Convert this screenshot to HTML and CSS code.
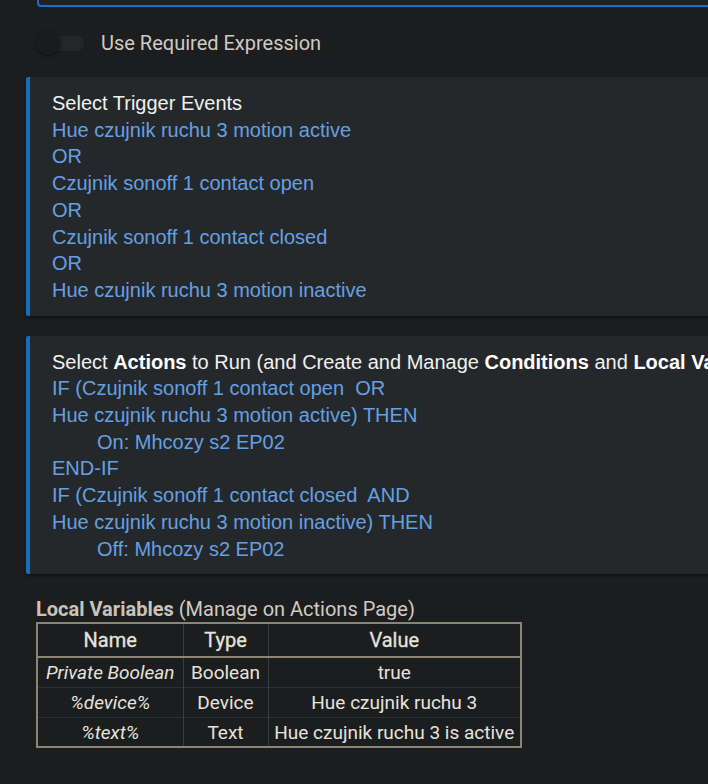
FILE: index.html
```html
<!DOCTYPE html>
<html lang="en">
<head>
  <meta charset="UTF-8">
  <meta name="viewport" content="width=device-width, initial-scale=1">
  <title>Rule Machine</title>
  <link rel="stylesheet" href="styles.css">
</head>
<body>
  <div class="page">
    <div class="expr-input"></div>

    <div class="switch-row">
      <span class="switch"><span class="knob"></span></span>
      <span class="switch-label">Use Required Expression</span>
    </div>

    <div class="card">
      <div class="card-title">Select Trigger Events</div>
      <div class="line">Hue czujnik ruchu 3 motion active</div>
      <div class="line">OR</div>
      <div class="line">Czujnik sonoff 1 contact open</div>
      <div class="line">OR</div>
      <div class="line">Czujnik sonoff 1 contact closed</div>
      <div class="line">OR</div>
      <div class="line">Hue czujnik ruchu 3 motion inactive</div>
    </div>

    <div class="card">
      <div class="card-title">Select <b>Actions</b> to Run (and Create and Manage <b>Conditions</b> and <b>Local Variables</b>)</div>
      <div class="line">IF (Czujnik sonoff 1 contact open&nbsp; OR</div>
      <div class="line">Hue czujnik ruchu 3 motion active) THEN</div>
      <div class="line indent">On: Mhcozy s2 EP02</div>
      <div class="line">END-IF</div>
      <div class="line">IF (Czujnik sonoff 1 contact closed&nbsp; AND</div>
      <div class="line">Hue czujnik ruchu 3 motion inactive) THEN</div>
      <div class="line indent">Off: Mhcozy s2 EP02</div>
    </div>

    <div class="vars">
      <div class="vars-title"><b>Local Variables</b> (Manage on Actions Page)</div>
      <table class="vars-table">
        <thead>
          <tr><th class="col-name">Name</th><th class="col-type">Type</th><th class="col-value">Value</th></tr>
        </thead>
        <tbody>
          <tr><td><i>Private Boolean</i></td><td>Boolean</td><td>true</td></tr>
          <tr><td><i>%device%</i></td><td>Device</td><td>Hue czujnik ruchu 3</td></tr>
          <tr><td><i>%text%</i></td><td>Text</td><td>Hue czujnik ruchu 3 is active</td></tr>
        </tbody>
      </table>
    </div>
  </div>
</body>
</html>
```

FILE: styles.css
```css
* { box-sizing: border-box; }
html, body {
  margin: 0;
  background: #1c1d1f;
  overflow: hidden;
}
body {
  font-family: 'Roboto', 'Liberation Sans', sans-serif;
  color: #cfcbc2;
}
.page {
  width: 1000px;
  padding: 0 0 40px 26px;
}
.expr-input {
  height: 40px;
  margin: -33px 0 0 11px;
  border: 2px solid #1f6ec2;
  border-radius: 4px;
  background: #1f2022;
}
.switch-row {
  display: flex;
  align-items: center;
  height: 30px;
  margin: 21px 0 0 10px;
}
.switch {
  position: relative;
  width: 44px;
  height: 15px;
  margin-left: 4px;
  border-radius: 8px;
  background: #252628;
}
.knob {
  position: absolute;
  left: -4px;
  top: -5px;
  width: 24px;
  height: 24px;
  border-radius: 50%;
  background: #1a1b1d;
  box-shadow: 0 1px 3px rgba(0,0,0,0.5);
}
.switch-label {
  margin-left: 17px;
  font-size: 20px;
  color: #cfcbc2;
}
.card {
  margin-top: 19px;
  padding: 13px 20px 12px 22px;
  background: #25282a;
  border-left: 4px solid #1a6bbd;
  border-radius: 2px;
  box-shadow: 0 2px 3px rgba(0,0,0,0.35);
  font-family: 'Liberation Sans', Arial, sans-serif;
  font-size: 20px;
  line-height: 26.7px;
  white-space: nowrap;
}
.card + .card { margin-top: 20px; }
.card-title { color: #f0f0f0; }
.card-title b { color: #ffffff; }
.line { color: #64a0e2; }
.line.indent { padding-left: 45px; }
.vars {
  margin: 23px 0 0 10px;
}
.vars-title {
  font-size: 20px;
  line-height: 24px;
  color: #cfcbc2;
}
.vars-title b {
  font-weight: 700;
  color: #c9c4ba;
}
.vars-table {
  margin-top: 1px;
  border-collapse: collapse;
  border: 2px solid #8c8576;
  font-size: 19px;
  color: #e6e3dd;
  white-space: nowrap;
}
.vars-table th {
  height: 34px;
  padding: 0 4px;
  font-weight: 400;
  font-size: 20px;
  -webkit-text-stroke: 0.3px #e6e3dd;
  border-bottom: 2px solid #8c8576;
  border-left: 1px solid #3b3c3e;
}
.vars-table td {
  height: 30px;
  padding: 0 4px;
  text-align: center;
  border-left: 1px solid #3b3c3e;
  border-top: 1px solid #2e2f31;
}
.vars-table th:first-child,
.vars-table td:first-child { border-left: none; }
.col-name { width: 146px; }
.col-type { width: 85px; }
.col-value { width: 253px; }
```
